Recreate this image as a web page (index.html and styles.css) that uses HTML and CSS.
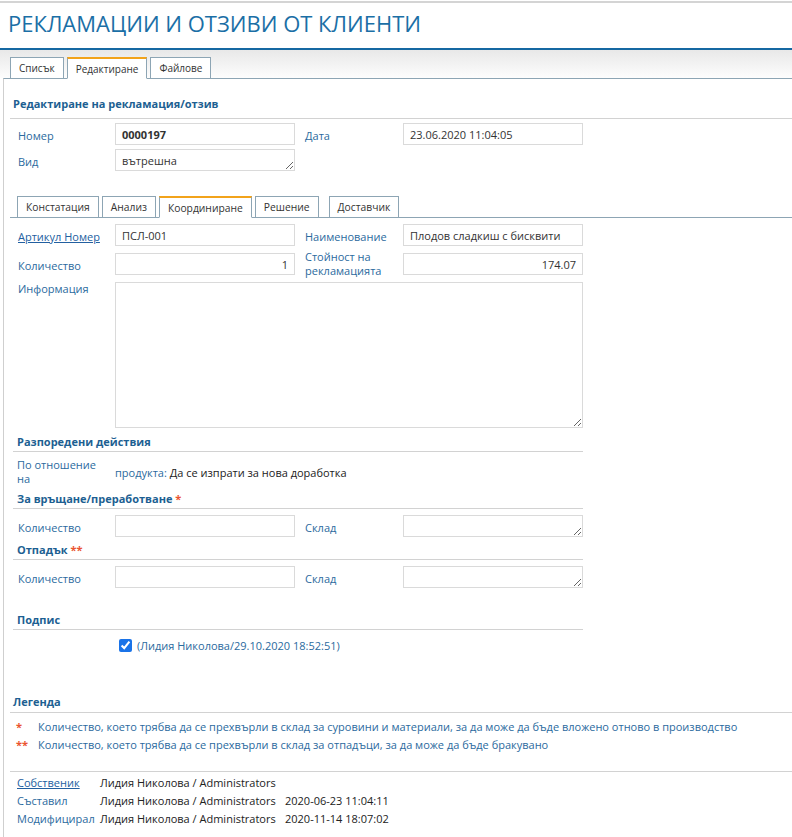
FILE: index.html
```html
<!DOCTYPE html>
<html lang="bg">
<head>
<meta charset="utf-8">
<title>Рекламации и отзиви от клиенти</title>
<link rel="stylesheet" href="styles.css">
</head>
<body>
<div class="topline"></div>
<header class="page-header">
  <h1 class="page-title">РЕКЛАМАЦИИ И ОТЗИВИ ОТ КЛИЕНТИ</h1>
</header>
<nav class="main-tabs">
  <span class="tab">Списък</span>
  <span class="tab active">Редактиране</span>
  <span class="tab">Файлове</span>
</nav>
<main class="panel">
  <h2 class="section-title first">Редактиране на рекламация/отзив</h2>

  <div class="form-grid head-grid">
    <span class="lbl">Номер</span>
    <div class="field strong">0000197</div>
    <span class="lbl lbl-right">Дата</span>
    <div class="field">23.06.2020 11:04:05</div>
    <span class="lbl">Вид</span>
    <textarea class="field area" readonly>вътрешна</textarea>
  </div>

  <nav class="sub-tabs">
    <span class="tab">Констатация</span>
    <span class="tab">Анализ</span>
    <span class="tab active">Координиране</span>
    <span class="tab">Решение</span>
    <span class="tab spaced">Доставчик</span>
  </nav>

  <div class="form-grid article-grid">
    <a class="lbl link" href="#">Артикул Номер</a>
    <div class="field">ПСЛ-001</div>
    <span class="lbl lbl-right">Наименование</span>
    <div class="field">Плодов сладкиш с бисквити</div>
    <span class="lbl">Количество</span>
    <div class="field num">1</div>
    <span class="lbl lbl-right two">Стойност на рекламацията</span>
    <div class="field num">174.07</div>
    <span class="lbl top">Информация</span>
    <textarea class="field info" readonly></textarea>
  </div>

  <h3 class="sub-title after-info">Разпоредени действия</h3>
  <div class="relation-row">
    <span class="lbl">По отношение на</span>
    <span class="relation-value"><span class="blue">продукта:</span> Да се изпрати за нова доработка</span>
  </div>

  <h3 class="sub-title">За връщане/преработване <span class="req">*</span></h3>
  <div class="form-grid qty-grid">
    <span class="lbl">Количество</span>
    <div class="field"></div>
    <span class="lbl lbl-right">Склад</span>
    <textarea class="field area" readonly></textarea>
  </div>

  <h3 class="sub-title">Отпадък <span class="req">**</span></h3>
  <div class="form-grid qty-grid">
    <span class="lbl">Количество</span>
    <div class="field"></div>
    <span class="lbl lbl-right">Склад</span>
    <textarea class="field area" readonly></textarea>
  </div>

  <h3 class="sub-title sign-title">Подпис</h3>
  <div class="sign-row">
    <input type="checkbox" class="sign-check" checked>
    <span class="blue">(Лидия Николова/29.10.2020 18:52:51)</span>
  </div>

  <h2 class="section-title legend-title">Легенда</h2>
  <div class="legend">
    <span class="req">*</span>
    <span class="blue">Количество, което трябва да се прехвърли в склад за суровини и материали, за да може да бъде вложено отново в производство</span>
    <span class="req">**</span>
    <span class="blue">Количество, което трябва да се прехвърли в склад за отпадъци, за да може да бъде бракувано</span>
  </div>

  <footer class="audit">
    <a class="lbl link" href="#">Собственик</a>
    <span class="val">Лидия Николова / Administrators</span>
    <span class="val"></span>
    <span class="lbl">Съставил</span>
    <span class="val">Лидия Николова / Administrators</span>
    <span class="val">2020-06-23 11:04:11</span>
    <span class="lbl">Модифицирал</span>
    <span class="val">Лидия Николова / Administrators</span>
    <span class="val">2020-11-14 18:07:02</span>
  </footer>
</main>
</body>
</html>
```
FILE: styles.css
```css
* { box-sizing: border-box; }

html, body {
  margin: 0;
  padding: 0;
  background: #fff;
}

body {
  font-family: "Open Sans", "Liberation Sans", sans-serif;
  font-size: 11px;
  color: #222;
}

.topline {
  margin-top: 1px;
  height: 2px;
  background: #d4d4d4;
}

.page-header {
  height: 47px;
  border-bottom: 2px solid #1568a2;
  padding: 4px 0 0 8px;
}

.page-title {
  margin: 0;
  font-size: 22px;
  font-weight: 400;
  line-height: 32px;
  color: #1b6fa6;
}

.main-tabs {
  display: flex;
  align-items: flex-end;
  height: 28px;
  padding-left: 10px;
  background: linear-gradient(#e8e8e8, #fdfdfd);
}

.tab {
  height: 22px;
  margin: 0 3px -1px 0;
  padding: 1px 8px 0;
  border: 1px solid #8da5b4;
  background: #fff;
  font-size: 10.3px;
  line-height: 19px;
  color: #333;
  white-space: nowrap;
}

.main-tabs .tab {
  font-size: 10px;
}

.tab.active {
  border-top: 2px solid #f2a31b;
  border-bottom-color: #fff;
  line-height: 18px;
}

.panel {
  margin-left: 3px;
  border-top: 1px solid #8da5b4;
  border-left: 1px solid #cfcfcf;
  min-height: 760px;
}

.section-title {
  margin: 16px 0 0 6px;
  padding: 1px 0 6px 3px;
  border-bottom: 1px solid #d2d2d2;
  font-size: 11px;
  font-weight: 700;
  line-height: 16px;
  color: #1d5f92;
}

.lbl {
  color: #2b6a9e;
  line-height: 14px;
  padding-top: 3px;
}

.lbl.two {
  padding-top: 0;
}

.link {
  text-decoration: underline;
  color: #2360a0;
}

.form-grid {
  display: grid;
  grid-template-columns: 97px 180px 108px 180px;
  row-gap: 4px;
  align-items: center;
  margin-left: 14px;
}

.lbl-right {
  padding-left: 10px;
}

.field {
  height: 22px;
  border: 1px solid #dadada;
  background: #fff;
  padding: 1px 6px 0;
  font-family: inherit;
  font-size: 11px;
  line-height: 20px;
  color: #333;
  white-space: nowrap;
  overflow: hidden;
}

.field.strong {
  font-weight: 700;
}

.field.num {
  text-align: right;
}

textarea.field {
  display: block;
  width: 100%;
  margin: 0;
  padding: 1px 6px 0;
  line-height: 20px;
  outline: none;
}

.head-grid {
  margin-top: 4px;
}

.sub-tabs {
  display: flex;
  align-items: flex-end;
  margin: 25px 0 0 6px;
  padding-left: 7px;
  border-bottom: 1px solid #8da5b4;
}

.tab.spaced {
  margin-left: 7px;
}

.article-grid {
  margin-top: 6px;
}

.lbl.top {
  align-self: start;
  padding-top: 0;
}

textarea.info {
  grid-column: 2 / 5;
  height: 146px;
}

.sub-title {
  width: 570px;
  margin: 4px 0 0 9px;
  padding: 1px 0 1px 4px;
  border-bottom: 1px solid #d2d2d2;
  font-size: 11px;
  font-weight: 700;
  line-height: 16px;
  color: #1d5f92;
}

.sub-title.after-info {
  margin-top: 5px;
}

.req {
  color: #ea5430;
  font-weight: 700;
}

.relation-row {
  display: grid;
  grid-template-columns: 98px auto;
  align-items: center;
  margin: 6px 0 0 13px;
}

.relation-row .lbl {
  width: 80px;
  padding-top: 0;
}

.blue {
  color: #2b6a9e;
}

.qty-grid {
  margin-top: 6px;
}

.sign-title {
  margin-top: 23px;
}

.sign-row {
  display: flex;
  align-items: center;
  margin: 7px 0 0 111px;
  height: 16px;
}

.sign-check {
  margin: 0 5px 0 4px;
  width: 13px;
  height: 13px;
  accent-color: #1a73e8;
}

.legend-title {
  margin-top: 41px;
  padding: 0 0 2px 3px;
}

.legend {
  display: grid;
  grid-template-columns: 22px auto;
  margin: 5px 0 0 12px;
  line-height: 18px;
}

.audit {
  display: grid;
  grid-template-columns: 83px 185px auto;
  margin: 17px 0 0 6px;
  padding: 2px 0 0 7px;
  border-top: 1px solid #d2d2d2;
  line-height: 18px;
}

.audit .lbl {
  padding-top: 0;
  line-height: 18px;
}

.audit .val {
  color: #222;
}
```
